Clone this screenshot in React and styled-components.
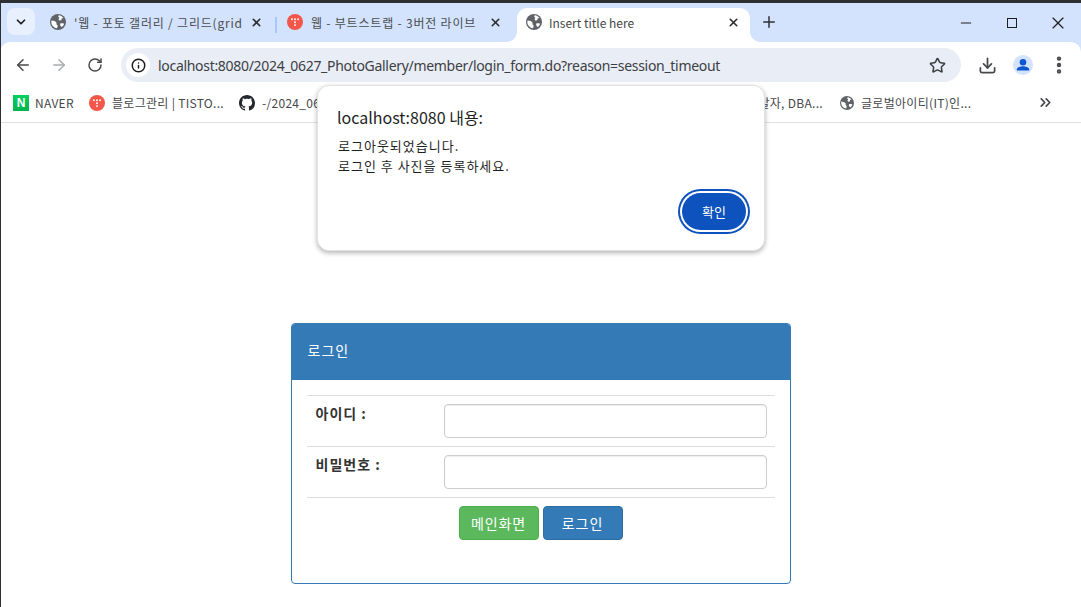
import React from "react";
import styled, { createGlobalStyle } from "styled-components";
import {
  ArrowLeft,
  ArrowRight,
  ChevronDown,
  ChevronsRight,
  Download,
  Info,
  Minus,
  MoreVertical,
  Plus,
  RotateCw,
  Star,
  X,
} from "lucide-react";

const FONT = `"Noto Sans CJK KR", "Noto Sans", sans-serif`;
const UI_FONT = `"Liberation Sans", "Noto Sans CJK KR", sans-serif`;
const STRIP = "#d3e3fd";

const GlobalStyle = createGlobalStyle`
  html, body { margin: 0; padding: 0; background: #fff; }
  body { width: 1081px; height: 607px; overflow: hidden; font-family: ${UI_FONT}; }
  * { box-sizing: border-box; }
`;

const Shell = styled.div`
  position: relative;
  width: 1081px;
  height: 607px;
  overflow: hidden;
  background: #fff;

  /* sliver of the desktop behind the window */
  &::after {
    content: "";
    position: absolute;
    left: 0;
    top: 0;
    bottom: 0;
    width: 1px;
    background: #2e2f32;
  }
`;

const TopEdge = styled.div`
  height: 3px;
  background: #2e2f32;
`;

const TabStrip = styled.div`
  height: 39px;
  background: ${STRIP};
  display: flex;
  padding: 5px 0 0 7px;
`;

const TabMenu = styled.div`
  width: 28px;
  height: 27px;
  border-radius: 8px;
  background: #e8f0fe;
  display: flex;
  align-items: center;
  justify-content: center;
  color: #1f1f1f;
  margin-right: 8px;
`;

const Tab = styled.div`
  position: relative;
  width: ${(p) => p.$width}px;
  height: 37px;
  display: flex;
  align-items: flex-start;
  padding: 6px ${(p) => p.$right}px 0 ${(p) => (p.$active ? 9 : 7)}px;
  gap: ${(p) => (p.$active ? 7 : 8)}px;
  border-radius: ${(p) => (p.$active ? "10px 10px 0 0" : "0")};
  background: ${(p) => (p.$active ? "#fff" : "transparent")};

  ${(p) =>
    p.$active &&
    `
    &::before, &::after {
      content: "";
      position: absolute;
      bottom: 3px;
      width: 10px;
      height: 10px;
    }
    &::before {
      left: -10px;
      background: radial-gradient(circle at 0 0, transparent 9.5px, #fff 10px);
    }
    &::after {
      right: -10px;
      background: radial-gradient(circle at 100% 0, transparent 9.5px, #fff 10px);
    }
  `}
`;

const TabTitle = styled.span`
  flex: 1;
  min-width: 0;
  font-family: ${FONT};
  font-size: 12px;
  line-height: 18px;
  letter-spacing: ${(p) => (p.$active ? "0" : "0.8px")};
  color: ${(p) => (p.$active ? "#444746" : "#4a4d50")};
  white-space: nowrap;
  overflow: hidden;
`;

const TabClose = styled.span`
  display: flex;
  color: #2b2c2e;
  padding-top: 2px;
`;

const TabDivider = styled.div`
  width: 2px;
  height: 16px;
  margin: 9px 3px 0 2px;
  background: #a8c7fa;
`;

const NewTab = styled.div`
  display: flex;
  color: #303134;
  margin: 5px 0 0 10px;
`;

const WindowControls = styled.div`
  margin-left: auto;
  display: flex;
  align-items: flex-start;
  padding-top: 5px;
`;

const WindowButton = styled.div`
  width: 46px;
  height: 20px;
  display: flex;
  align-items: center;
  justify-content: center;
  color: #1f1f1f;
`;

const MaximizeBox = styled.span`
  width: 10px;
  height: 10px;
  border: 1px solid #1f1f1f;
`;

const ToolbarFrame = styled.div`
  background: ${STRIP};
`;

const Toolbar = styled.div`
  height: 42px;
  background: #fff;
  display: flex;
  align-items: center;
  border-radius: 10px 10px 0 0;
  padding: 4px 0 0 10px;
`;

const NavButton = styled.div`
  width: 25px;
  height: 25px;
  margin-right: 11px;
  display: flex;
  align-items: center;
  justify-content: center;
  color: ${(p) => (p.$disabled ? "#a9acaf" : "#46484b")};
`;

const AddressBar = styled.div`
  width: 840px;
  height: 34px;
  margin-left: 3px;
  border-radius: 17px;
  background: #e9edf6;
  display: flex;
  align-items: center;
  padding: 0 15px 0 5px;
`;

const SiteInfo = styled.div`
  width: 24px;
  height: 24px;
  border-radius: 50%;
  background: #fff;
  display: flex;
  align-items: center;
  justify-content: center;
  color: #1f1f1f;
  margin-right: 8px;
`;

const UrlText = styled.span`
  flex: 1;
  font-family: "Noto Sans", sans-serif;
  font-size: 14px;
  letter-spacing: -0.305px;
  color: #3d4043;
`;

const ToolActions = styled.div`
  display: flex;
  align-items: center;
  margin-left: 8px;
  color: #46484b;
`;

const ToolAction = styled.div`
  width: 36px;
  display: flex;
  justify-content: center;
`;

const Avatar = styled.div`
  width: 20px;
  height: 20px;
  border-radius: 50%;
  background: ${STRIP};
  display: flex;
`;

const Bookmarks = styled.div`
  height: 39px;
  border-bottom: 1px solid #dfe1e5;
  display: flex;
  align-items: center;
  padding: 0 0 1px 13px;
  position: relative;
`;

const Bookmark = styled.div`
  display: flex;
  align-items: center;
  justify-content: ${(p) => (p.$alignEnd ? "flex-end" : "flex-start")};
  gap: 7px;
  width: ${(p) => p.$width}px;
  padding-right: ${(p) => (p.$alignEnd ? 17 : 0)}px;
  flex-shrink: 0;
  overflow: hidden;
`;

const BookmarkLabel = styled.span`
  font-family: ${FONT};
  font-size: 12px;
  letter-spacing: 0.3px;
  color: #45474a;
  white-space: nowrap;
`;

const NaverBadge = styled.span`
  width: 16px;
  height: 16px;
  margin-right: -1px;
  background: linear-gradient(#04d05f, #01b34f);
  color: #fff;
  font: bold 12px/16px ${UI_FONT};
  text-align: center;
  flex-shrink: 0;
`;

const OverflowButton = styled.div`
  position: absolute;
  left: 1037px;
  top: 10px;
  display: flex;
  color: #46484b;
`;

const Content = styled.main`
  padding-top: 200px;
  display: flex;
  justify-content: center;
`;

const Panel = styled.section`
  width: 500px;
  height: 261px;
  border: 1px solid #337ab7;
  border-radius: 4px;
  overflow: hidden;
  background: #fff;
  font-family: ${FONT};
`;

const PanelHeading = styled.div`
  height: 57px;
  margin: -1px -1px 0;
  background: #337ab7;
  color: #fff;
  font-size: 14px;
  letter-spacing: 1px;
  line-height: 20px;
  padding: 17px 17px;
`;

const PanelBody = styled.div`
  padding: 15px;
`;

const FieldRow = styled.div`
  display: flex;
  height: 51px;
  border-top: 1px solid #ddd;
  padding: 8px 8px 8px 9px;
`;

const FieldLabel = styled.label`
  width: 128px;
  font-size: 14px;
  font-weight: 700;
  letter-spacing: 1px;
  line-height: 18px;
  color: #333;
`;

const TextInput = styled.input`
  width: 323px;
  height: 34px;
  background: #fff;
  border: 1px solid #ccc;
  border-radius: 4px;
  box-shadow: inset 0 1px 1px rgba(0, 0, 0, 0.075);
`;

const ButtonRow = styled.div`
  display: flex;
  justify-content: center;
  gap: 4px;
  border-top: 1px solid #ddd;
  padding-top: 8px;
`;

const PanelButton = styled.button`
  width: 80px;
  height: 34px;
  padding: 0;
  font-family: ${FONT};
  font-size: 14px;
  letter-spacing: 0.9px;
  color: #fff;
  background: ${(p) => (p.$variant === "success" ? "#5cb85c" : "#337ab7")};
  border: 1px solid ${(p) => (p.$variant === "success" ? "#4cae4c" : "#2e6da4")};
  border-radius: 4px;
`;

const AlertDialog = styled.div`
  position: absolute;
  left: 317px;
  top: 85px;
  width: 448px;
  height: 166px;
  padding: 20px;
  background: #fff;
  border-radius: 12px;
  border: 1px solid #e3e3e3;
  box-shadow: 0 2px 5px rgba(0, 0, 0, 0.3);
  font-family: ${FONT};
  display: flex;
  flex-direction: column;
`;

const AlertTitle = styled.div`
  font-size: 16px;
  line-height: 22px;
  color: #1f1f1f;
  margin-left: -1px;
`;

const AlertMessage = styled.div`
  margin-top: 8px;
  font-size: 13px;
  letter-spacing: 1px;
  line-height: 20px;
  color: #1f1f1f;
`;

const AlertActions = styled.div`
  margin-top: auto;
  display: flex;
  justify-content: flex-end;
  margin-right: -2px;
`;

const ConfirmButton = styled.button`
  width: 64px;
  height: 37px;
  padding: 0;
  border: 0;
  border-radius: 19px;
  background: #0e52bd;
  box-shadow: 0 0 0 2px #fff, 0 0 0 4px #0e52bd;
  color: #fff;
  font-family: ${FONT};
  font-size: 13px;
`;

const GithubMark = () => (
  <svg width="16" height="16" viewBox="0 0 16 16" fill="#24292f">
    <path d="M8 0C3.58 0 0 3.58 0 8c0 3.54 2.29 6.53 5.47 7.59.4.07.55-.17.55-.38 0-.19-.01-.82-.01-1.49-2.01.37-2.53-.49-2.69-.94-.09-.23-.48-.94-.82-1.13-.28-.15-.68-.52-.01-.53.63-.01 1.08.58 1.23.82.72 1.21 1.87.87 2.33.66.07-.52.28-.87.51-1.07-1.78-.2-3.64-.89-3.64-3.95 0-.87.31-1.59.82-2.15-.08-.2-.36-1.02.08-2.12 0 0 .67-.21 2.2.82.64-.18 1.32-.27 2-.27s1.36.09 2 .27c1.53-1.04 2.2-.82 2.2-.82.44 1.1.16 1.92.08 2.12.51.56.82 1.27.82 2.15 0 3.07-1.87 3.75-3.65 3.95.29.25.54.73.54 1.48 0 1.07-.01 1.93-.01 2.2 0 .21.15.46.55.38A8.01 8.01 0 0 0 16 8c0-4.42-3.58-8-8-8z" />
  </svg>
);

const TistoryMark = () => (
  <svg width="16" height="16" viewBox="0 0 16 16">
    <circle cx="8" cy="8" r="8" fill="#f4574a" />
    <g fill="#fff">
      <circle cx="4.9" cy="5.2" r="0.95" />
      <circle cx="8" cy="5.2" r="0.95" />
      <circle cx="11.1" cy="5.2" r="0.95" />
      <circle cx="8" cy="8.2" r="0.95" />
      <circle cx="8" cy="11.1" r="0.95" />
    </g>
  </svg>
);

const WorldMark = ({ size = 16 }) => (
  <svg width={size} height={size} viewBox="0 0 16 16">
    <circle cx="8" cy="8" r="8" fill="#5f6368" />
    <path
      fill="#fff"
      d="M8.7 1.3c1.9.2 3.5 1.2 4.6 2.7l-1.6.4-.5 1.8-1.9.4-.8-1.4.9-1.3-1.2-1.1zM1.6 6.4l3.2.7 1.8 1.6-.2 1.5 1.3 1.2-.6 2.9C4 14 1.4 11.4 1.3 8c0-.6.1-1.1.3-1.6zM10.4 9.2h2.5l1.2.6c-.4 1.4-1.3 2.6-2.5 3.3l-1.5-1.9z"
    />
  </svg>
);

const PersonMark = () => (
  <svg width="20" height="20" viewBox="0 0 20 20" fill="#0b57d0">
    <circle cx="10" cy="7.2" r="3.3" />
    <path d="M3.8 15.6v-1c0-2.2 3.9-3.3 6.2-3.3s6.2 1.1 6.2 3.3v1z" />
  </svg>
);

const App = () => {
  return (
    <Shell>
      <GlobalStyle />
      <TopEdge />
      <TabStrip>
        <TabMenu>
          <ChevronDown size={14} strokeWidth={3} />
        </TabMenu>
        <Tab $width={230} $right={10}>
          <WorldMark />
          <TabTitle>'웹 - 포토 갤러리 / 그리드(grid</TabTitle>
          <TabClose>
            <X size={13} strokeWidth={3} />
          </TabClose>
        </Tab>
        <TabDivider />
        <Tab $width={237} $right={15}>
          <TistoryMark />
          <TabTitle>웹 - 부트스트랩 - 3버전 라이브</TabTitle>
          <TabClose>
            <X size={13} strokeWidth={3} />
          </TabClose>
        </Tab>
        <Tab $active $width={233} $right={10}>
          <WorldMark />
          <TabTitle $active>Insert title here</TabTitle>
          <TabClose>
            <X size={13} strokeWidth={3} />
          </TabClose>
        </Tab>
        <NewTab>
          <Plus size={18} strokeWidth={2} />
        </NewTab>
        <WindowControls>
          <WindowButton>
            <Minus size={16} strokeWidth={1.6} />
          </WindowButton>
          <WindowButton>
            <MaximizeBox />
          </WindowButton>
          <WindowButton>
            <X size={20} strokeWidth={1.4} />
          </WindowButton>
        </WindowControls>
      </TabStrip>
      <ToolbarFrame>
        <Toolbar>
          <NavButton>
            <ArrowLeft size={18} strokeWidth={2} />
          </NavButton>
          <NavButton $disabled>
            <ArrowRight size={18} strokeWidth={2} />
          </NavButton>
          <NavButton>
            <RotateCw size={16} strokeWidth={2.2} />
          </NavButton>
          <AddressBar>
            <SiteInfo>
              <Info size={15} strokeWidth={2.4} />
            </SiteInfo>
            <UrlText>localhost:8080/2024_0627_PhotoGallery/member/login_form.do?reason=session_timeout</UrlText>
            <Star size={17} strokeWidth={2.2} color="#3c3f42" />
          </AddressBar>
          <ToolActions>
            <ToolAction>
              <Download size={19} strokeWidth={2.2} />
            </ToolAction>
            <ToolAction>
              <Avatar>
                <PersonMark />
              </Avatar>
            </ToolAction>
            <ToolAction>
              <MoreVertical size={22} strokeWidth={2.8} />
            </ToolAction>
          </ToolActions>
        </Toolbar>
      </ToolbarFrame>
      <Bookmarks>
        <Bookmark $width={76}>
          <NaverBadge>N</NaverBadge>
          <BookmarkLabel>NAVER</BookmarkLabel>
        </Bookmark>
        <Bookmark $width={150}>
          <TistoryMark />
          <BookmarkLabel>블로그관리 | TISTO...</BookmarkLabel>
        </Bookmark>
        <Bookmark $width={280}>
          <GithubMark />
          <BookmarkLabel>-/2024_0627_PhotoGallery</BookmarkLabel>
        </Bookmark>
        <Bookmark $alignEnd $width={321}>
          <BookmarkLabel>풀스택 웹 개발자, DBA...</BookmarkLabel>
        </Bookmark>
        <Bookmark $width={150}>
          <WorldMark size={14} />
          <BookmarkLabel>글로벌아이티(IT)인...</BookmarkLabel>
        </Bookmark>
        <OverflowButton>
          <ChevronsRight size={17} strokeWidth={2.4} />
        </OverflowButton>
      </Bookmarks>
      <Content>
        <Panel>
          <PanelHeading>로그인</PanelHeading>
          <PanelBody>
            <FieldRow>
              <FieldLabel>아이디 :</FieldLabel>
              <TextInput type="text" />
            </FieldRow>
            <FieldRow>
              <FieldLabel>비밀번호 :</FieldLabel>
              <TextInput type="password" />
            </FieldRow>
            <ButtonRow>
              <PanelButton $variant="success">메인화면</PanelButton>
              <PanelButton>로그인</PanelButton>
            </ButtonRow>
          </PanelBody>
        </Panel>
      </Content>
      <AlertDialog>
        <AlertTitle>localhost:8080 내용:</AlertTitle>
        <AlertMessage>
          로그아웃되었습니다.
          <br />
          로그인 후 사진을 등록하세요.
        </AlertMessage>
        <AlertActions>
          <ConfirmButton>확인</ConfirmButton>
        </AlertActions>
      </AlertDialog>
    </Shell>
  );
};

export default App;
